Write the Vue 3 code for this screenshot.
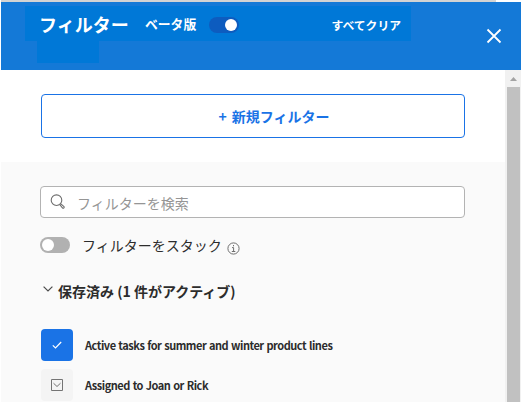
<script setup>
import { ref } from 'vue'

const beta = ref(true)
const stacked = ref(false)
const query = ref('')
const filters = ref([
  { name: 'Active tasks for summer and winter product lines', active: true },
  { name: 'Assigned to Joan or Rick', active: false },
])
</script>

<template>
  <div class="panel">
    <div class="edge"></div>
    <header class="header">
      <div class="title-bar">
        <h1 class="title">フィルター</h1>
        <span class="beta">ベータ版</span>
        <button class="switch" :class="{ on: beta }" aria-label="ベータ版" @click="beta = !beta">
          <span class="knob"></span>
        </button>
        <button class="clear">すべてクリア</button>
      </div>
      <div class="subtitle"></div>
      <button class="close" aria-label="閉じる">
        <svg width="16" height="16" viewBox="0 0 16 16">
          <path d="M1.5 1.5 14.5 14.5M14.5 1.5 1.5 14.5" />
        </svg>
      </button>
    </header>

    <div class="body">
      <main class="content">
        <section class="create">
          <button class="new-filter"><span class="plus">+</span><span>新規フィルター</span></button>
        </section>

        <section class="list">
          <label class="search">
            <svg width="16" height="16" viewBox="0 0 16 16">
              <circle cx="6.5" cy="6.2" r="5.3" />
              <path d="M10.6 9.7 14 12.6a1 1 0 0 1-1.4 1.4L9.8 10.6" />
            </svg>
            <input v-model="query" placeholder="フィルターを検索" />
          </label>

          <div class="stack">
            <button class="switch" :class="{ on: stacked }" aria-label="スタック" @click="stacked = !stacked">
              <span class="knob"></span>
            </button>
            <span class="stack-label">フィルターをスタック</span>
            <svg class="info" width="13" height="13" viewBox="0 0 13 13">
              <circle cx="6.5" cy="6.5" r="5.6" />
              <path d="M6.5 3v1.3M5 5.6h1.6v4M4.8 9.5h3.5" />
            </svg>
          </div>

          <h2 class="group">
            <svg width="10" height="6" viewBox="0 0 10 6"><path d="M.6.6 5 5 9.4.6" /></svg>
            <span>保存済み (1 件がアクティブ)</span>
          </h2>

          <div v-for="f in filters" :key="f.name" class="row">
            <button class="toggle" :class="{ active: f.active }" :aria-label="f.name" @click="f.active = !f.active">
              <svg v-if="f.active" width="10" height="8" viewBox="0 0 10 8"><path d="M.8 4.4 3.5 7 9.2 1" /></svg>
              <svg v-else width="12" height="12" viewBox="0 0 12 12">
                <path d="M.5.5h11v11H.5z" /><path d="M2.5 4.2 6 7.5 9.5 4.2" />
              </svg>
            </button>
            <span class="name">{{ f.name }}</span>
          </div>
        </section>
      </main>

      <div class="scrollbar">
        <svg width="7" height="4" viewBox="0 0 7 4"><path d="M3.5 0 7 4H0z" /></svg>
        <div class="thumb"></div>
      </div>
    </div>
  </div>
</template>

<style>
body {
  background: #fff;
  overflow: hidden;
}
</style>

<style scoped>
.panel {
  box-sizing: border-box;
  width: 521px;
  height: 402px;
  padding-left: 1px;
  overflow: hidden;
  display: flex;
  flex-direction: column;
  font-family: "Noto Sans CJK JP", sans-serif;
  color: #2c2c2c;
}
button {
  border: 0;
  padding: 0;
  margin: 0;
  background: none;
  font: inherit;
  color: inherit;
}
h1,
h2 {
  margin: 0;
}
svg {
  display: block;
  flex: none;
  fill: none;
}
.edge {
  flex: none;
  width: 495px;
  height: 2px;
  background: #d3d3d3;
}
.header {
  flex: none;
  box-sizing: border-box;
  height: 68px;
  padding: 4px 19px 7px 24px;
  background: #1479d7;
  color: #fff;
  display: grid;
  grid-template-columns: 386px 1fr;
  grid-template-rows: 35px 22px;
}
.title-bar {
  background: #0078d7;
  display: flex;
  align-items: center;
  padding: 0 10px 0 14px;
}
.title {
  width: 106px;
  font-size: 18px;
  line-height: 26px;
  font-weight: 700;
}
.beta {
  width: 64px;
  font-size: 12.8px;
  line-height: 20px;
  font-weight: 700;
}
.title-bar .switch {
  margin-top: 2px;
}
.switch {
  box-sizing: border-box;
  flex: none;
  width: 30px;
  height: 16px;
  border-radius: 8px;
  padding: 0 2px;
  display: flex;
  align-items: center;
  background: #b1b1b1;
}
.knob {
  width: 12px;
  height: 12px;
  border-radius: 50%;
  background: #fff;
}
.switch.on {
  background: #0d5cbf;
  justify-content: flex-end;
}
.clear {
  margin: 3px 0 0 auto;
  font-size: 11.8px;
  line-height: 18px;
  font-weight: 700;
}
.subtitle {
  grid-row: 2;
  width: 62px;
  margin-left: 12px;
  background: #0078d7;
}
.close {
  grid-column: 2;
  grid-row: 1 / 3;
  align-self: center;
  justify-self: end;
  margin-top: 3px;
}
.close svg {
  stroke: #fff;
  stroke-width: 1.8;
}
.body {
  flex: 1;
  min-height: 0;
  display: flex;
}
.content {
  width: 504px;
  display: flex;
  flex-direction: column;
  overflow: hidden;
}
.create {
  flex: none;
  padding: 24px 40px;
}
.new-filter {
  box-sizing: border-box;
  width: 424px;
  height: 44px;
  padding-left: 42px;
  border: 1px solid #1a73e6;
  border-radius: 4px;
  background: #fff;
  color: #1a73e6;
  font-size: 14px;
  line-height: 20px;
  font-weight: 700;
  display: flex;
  justify-content: center;
  align-items: center;
  gap: 5px;
}
.list {
  flex: none;
  height: 240px;
  box-sizing: border-box;
  padding: 24px 40px 0 39px;
  background: #fafafa;
}
.search {
  box-sizing: border-box;
  height: 32px;
  border: 1px solid #b3b3b3;
  border-radius: 4px;
  background: #fff;
  padding: 0 9px;
  display: flex;
  align-items: center;
  gap: 11px;
}
.search svg {
  stroke: #6e6e6e;
  stroke-width: 1.1;
}
.search input {
  flex: 1;
  min-width: 0;
  height: 30px;
  border: 0;
  padding: 2px 0 0;
  outline: 0;
  background: transparent;
  box-sizing: border-box;
  font: 14px "Noto Sans CJK JP", sans-serif;
}
.search input::placeholder {
  color: #959595;
}
.stack {
  height: 20px;
  margin-top: 17px;
  display: flex;
  align-items: center;
}
.stack-label {
  margin-left: 12px;
  font-size: 14px;
  line-height: 20px;
}
.info {
  margin: 6px 0 0 5px;
  stroke: #6e6e6e;
  stroke-width: 1;
}
.group {
  height: 20px;
  margin: 26px 0 28px;
  padding-left: 3px;
  display: flex;
  align-items: center;
  gap: 5px;
  font-size: 14px;
  line-height: 20px;
  font-weight: 700;
  white-space: nowrap;
}
.group svg {
  margin-top: -4px;
  stroke: #4b4b4b;
  stroke-width: 1.2;
}
.row {
  height: 32px;
  margin: 0 0 8px 1px;
  display: flex;
  align-items: center;
  gap: 12px;
}
.toggle {
  width: 32px;
  height: 32px;
  border-radius: 4px;
  background: #f4f4f4;
  display: grid;
  place-items: center;
}
.toggle svg {
  stroke: #747474;
  stroke-width: 1;
}
.toggle.active {
  background: #1a73e6;
}
.toggle.active svg {
  stroke: #fff;
  stroke-width: 1.2;
}
.name {
  font-size: 11px;
  line-height: 18px;
  font-weight: 700;
  letter-spacing: -0.46px;
  word-spacing: 0.7px;
  white-space: nowrap;
}
.scrollbar {
  box-sizing: border-box;
  width: 16px;
  padding: 7px 1px 0 2px;
  background: #f1f1f1;
  display: flex;
  flex-direction: column;
  align-items: center;
  gap: 6px;
}
.scrollbar svg {
  fill: #a3a3a3;
}
.thumb {
  flex: 1;
  align-self: stretch;
  background: #c1c1c1;
}
</style>
